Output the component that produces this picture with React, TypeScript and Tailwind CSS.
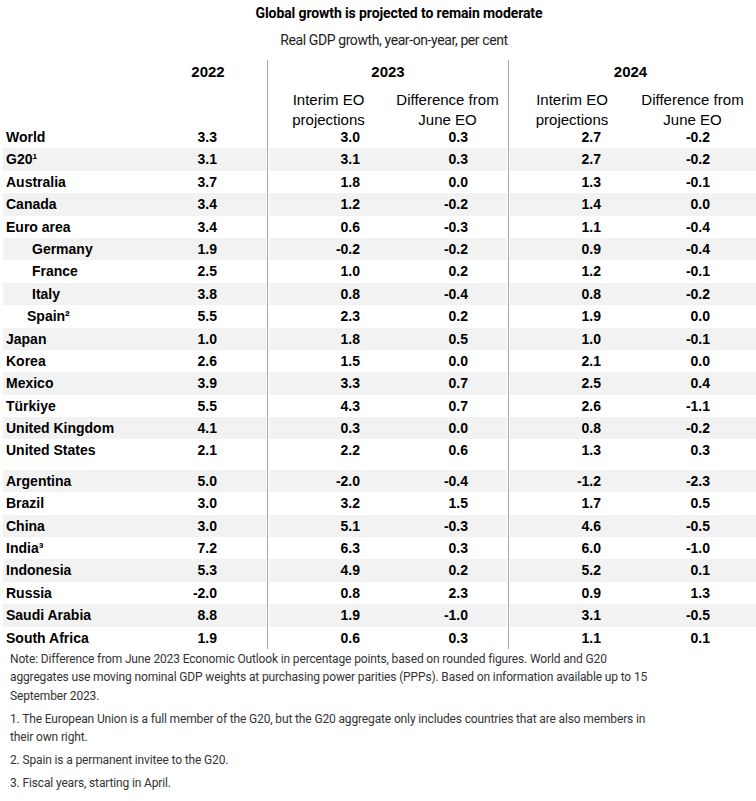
import type { ReactNode } from 'react';

type Row = {
  name: string;
  indent?: 'full' | 'spain';
  values: [string, string, string, string, string];
};

const groupA: Row[] = [
  { name: 'World', values: ['3.3', '3.0', '0.3', '2.7', '-0.2'] },
  { name: 'G20¹', values: ['3.1', '3.1', '0.3', '2.7', '-0.2'] },
  { name: 'Australia', values: ['3.7', '1.8', '0.0', '1.3', '-0.1'] },
  { name: 'Canada', values: ['3.4', '1.2', '-0.2', '1.4', '0.0'] },
  { name: 'Euro area', values: ['3.4', '0.6', '-0.3', '1.1', '-0.4'] },
  { name: 'Germany', indent: 'full', values: ['1.9', '-0.2', '-0.2', '0.9', '-0.4'] },
  { name: 'France', indent: 'full', values: ['2.5', '1.0', '0.2', '1.2', '-0.1'] },
  { name: 'Italy', indent: 'full', values: ['3.8', '0.8', '-0.4', '0.8', '-0.2'] },
  { name: 'Spain²', indent: 'spain', values: ['5.5', '2.3', '0.2', '1.9', '0.0'] },
  { name: 'Japan', values: ['1.0', '1.8', '0.5', '1.0', '-0.1'] },
  { name: 'Korea', values: ['2.6', '1.5', '0.0', '2.1', '0.0'] },
  { name: 'Mexico', values: ['3.9', '3.3', '0.7', '2.5', '0.4'] },
  { name: 'Türkiye', values: ['5.5', '4.3', '0.7', '2.6', '-1.1'] },
  { name: 'United Kingdom', values: ['4.1', '0.3', '0.0', '0.8', '-0.2'] },
  { name: 'United States', values: ['2.1', '2.2', '0.6', '1.3', '0.3'] },
];

const groupB: Row[] = [
  { name: 'Argentina', values: ['5.0', '-2.0', '-0.4', '-1.2', '-2.3'] },
  { name: 'Brazil', values: ['3.0', '3.2', '1.5', '1.7', '0.5'] },
  { name: 'China', values: ['3.0', '5.1', '-0.3', '4.6', '-0.5'] },
  { name: 'India³', values: ['7.2', '6.3', '0.3', '6.0', '-1.0'] },
  { name: 'Indonesia', values: ['5.3', '4.9', '0.2', '5.2', '0.1'] },
  { name: 'Russia', values: ['-2.0', '0.8', '2.3', '0.9', '1.3'] },
  { name: 'Saudi Arabia', values: ['8.8', '1.9', '-1.0', '3.1', '-0.5'] },
  { name: 'South Africa', values: ['1.9', '0.6', '0.3', '1.1', '0.1'] },
];

const cols = 'grid grid-cols-[147px_116px_3px_119px_119px_3px_124px_117px]';

const Sep = () => (
  <div className="flex justify-center bg-white">
    <div className="w-px bg-[#a6a6a6]" />
  </div>
);

const DataRow = ({ row, shaded }: { row: Row; shaded: boolean }) => {
  const [a, b, c, d, e] = row.values;
  const pad = row.indent === 'full' ? 'pl-[29px]' : row.indent === 'spain' ? 'pl-[24px]' : 'pl-[3px]';
  return (
    <div className={`${cols} h-[22.4px] leading-[22.4px] ${shaded ? 'bg-[#f2f2f2]' : 'bg-white'}`}>
      <div className={`${pad} whitespace-nowrap`}>{row.name}</div>
      <div className="text-right pr-[49px]">{a}</div>
      <Sep />
      <div className="text-right pr-[28px]">{b}</div>
      <div className="text-right pr-[39px]">{c}</div>
      <Sep />
      <div className="text-right pr-[33px]">{d}</div>
      <div className="text-right pr-[41px]">{e}</div>
    </div>
  );
};

const SubHead = ({ children }: { children: ReactNode }) => (
  <div className="text-center leading-[19.5px] text-[15px] text-black whitespace-nowrap">{children}</div>
);

const YearHead = ({ children }: { children: ReactNode }) => (
  <div className="text-center text-[15px] leading-[18px] font-bold">{children}</div>
);

export default function App() {
  return (
    <div className="w-[756px] h-[801px] bg-white overflow-hidden font-['Roboto',sans-serif]">
      <div className="h-[60px] pt-[4px]">
        <div className="pl-[42px] text-center text-[14px] leading-[18px] font-bold tracking-[-0.1px] text-black">
          Global growth is projected to remain moderate
        </div>
        <div className="pl-[32px] mt-[9px] text-center text-[14px] leading-[18px] tracking-[-0.4px] text-[#222]">
          Real GDP growth, year-on-year, per cent
        </div>
      </div>

      <div className="pl-[3px]">
        <div className={`${cols} h-[66px] font-['Liberation_Sans',Arial,sans-serif]`}>
          <div />
          <div className="pt-[3px]">
            <YearHead>2022</YearHead>
          </div>
          <Sep />
          <div className="col-span-2 pt-[3px]">
            <YearHead>2023</YearHead>
            <div className="grid grid-cols-2 mt-[9px]">
              <SubHead>
                Interim EO
                <br />
                projections
              </SubHead>
              <SubHead>
                Difference from
                <br />
                June EO
              </SubHead>
            </div>
          </div>
          <Sep />
          <div className="col-span-2 pt-[3px]">
            <YearHead>2024</YearHead>
            <div className="grid grid-cols-[124px_117px] mt-[9px]">
              <SubHead>
                Interim EO
                <br />
                projections
              </SubHead>
              <SubHead>
                Difference from
                <br />
                June EO
              </SubHead>
            </div>
          </div>
        </div>

        <div className="font-['Liberation_Sans',Arial,sans-serif] font-bold text-[14px] text-black">
          {groupA.map((r, i) => (
            <DataRow key={r.name} row={r} shaded={i % 2 === 1} />
          ))}
          <div className={`${cols} h-[8px]`}>
            <div />
            <div />
            <Sep />
            <div />
            <div />
            <Sep />
            <div />
            <div />
          </div>
          {groupB.map((r, i) => (
            <DataRow key={r.name} row={r} shaded={i % 2 === 0} />
          ))}
        </div>
      </div>

      <div className="pl-[10px] pr-[6px] pt-[1px] flex flex-col gap-[4.5px] text-[12px] leading-[18.5px] tracking-[-0.14px] text-[#333]">
        <p>
          Note: Difference from June 2023 Economic Outlook in percentage points, based on rounded figures. World and G20
          <br />
          aggregates use moving nominal GDP weights at purchasing power parities (PPPs). Based on information available up to 15
          <br />
          September 2023.
        </p>
        <p>
          1. The European Union is a full member of the G20, but the G20 aggregate only includes countries that are also members in
          <br />
          their own right.
        </p>
        <p>2. Spain is a permanent invitee to the G20.</p>
        <p>3. Fiscal years, starting in April.</p>
      </div>
    </div>
  );
}
